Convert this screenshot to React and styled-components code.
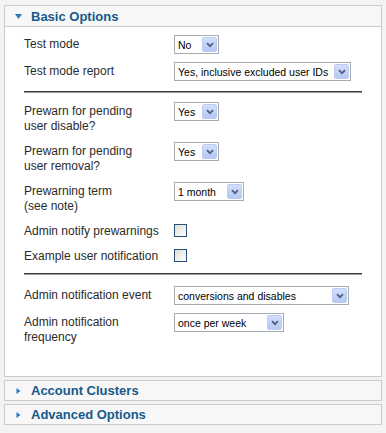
import React from "react";
import styled, { createGlobalStyle } from "styled-components";

const GlobalStyle = createGlobalStyle`
  body {
    margin: 0;
    background: #f3f3f3;
    font-family: "Liberation Sans", Arial, sans-serif;
  }
`;

const Page = styled.div`
  padding: 5px 4px;
`;

const Panel = styled.div`
  border: 1px solid #cccccc;
  background: #ffffff;
  margin-bottom: 3px;
`;

const Header = styled.div`
  display: flex;
  align-items: center;
  gap: 9px;
  height: ${(p) => (p.open ? "20px" : "19px")};
  padding-left: 10px;
  background: #f7f7f7;
  border-bottom: ${(p) => (p.open ? "1px solid #cccccc" : "none")};
`;

const Title = styled.span`
  font-size: 13px;
  font-weight: bold;
  color: #15598c;
`;

const Body = styled.div`
  padding: 4px 19px 27px;
`;

const Row = styled.div`
  display: grid;
  grid-template-columns: 150px auto;
  align-items: start;
  padding: 4px 0;
`;

const Label = styled.div`
  font-size: 12px;
  line-height: 15px;
  padding-top: 2px;
  color: #2b2b2b;
`;

const Divider = styled.div`
  height: 1px;
  border-top: 1px solid #3c3c3c;
  background: #9a9a9a;
  margin: ${(p) => p.margin};
`;

const SelectBox = styled.div`
  box-sizing: border-box;
  display: flex;
  align-items: center;
  justify-content: space-between;
  width: ${(p) => p.width}px;
  height: 19px;
  border: 1px solid #a5acb2;
  background: #ffffff;
  padding: 1px 1px 1px 3px;
  font-size: 10.5px;
  color: #000;
`;

const ArrowButton = styled.span`
  box-sizing: border-box;
  display: flex;
  align-items: center;
  justify-content: center;
  width: 15px;
  height: 15px;
  border: 1px solid #bccbf3;
  border-radius: 2px;
  background: linear-gradient(#d3defb, #b6c8f4);
`;

const CheckBox = styled.span`
  box-sizing: border-box;
  display: block;
  width: 13px;
  height: 13px;
  margin-top: 2px;
  border: 1px solid #2a4e74;
  background: linear-gradient(135deg, #dcdcd6, #ffffff);
`;

function Triangle({ open }) {
  return open ? (
    <svg width="7" height="5" viewBox="0 0 7 5">
      <path d="M0 0h7L3.5 5z" fill="#2d7bbd" />
    </svg>
  ) : (
    <svg width="7" height="6" viewBox="0 0 7 6">
      <path d="M1.5 0v6L5.5 3z" fill="#2d7bbd" />
    </svg>
  );
}

function Select({ value, width }) {
  return (
    <SelectBox width={width}>
      <span>{value}</span>
      <ArrowButton>
        <svg width="8" height="6" viewBox="0 0 8 6">
          <path d="M1 1.2l3 3 3-3" stroke="#4d6185" strokeWidth="1.8" fill="none" />
        </svg>
      </ArrowButton>
    </SelectBox>
  );
}

const Field = ({ label, children }) => (
  <Row>
    <Label>{label}</Label>
    <div>{children}</div>
  </Row>
);

export default function App() {
  return (
    <Page>
      <GlobalStyle />
      <Panel>
        <Header open>
          <Triangle open />
          <Title>Basic Options</Title>
        </Header>
        <Body>
          <Field label="Test mode">
            <Select value="No" width={45} />
          </Field>
          <Field label="Test mode report">
            <Select value="Yes, inclusive excluded user IDs" width={177} />
          </Field>
          <Divider margin="6px 0 5px" />
          <Field label={<>Prewarn for pending<br />user disable?</>}>
            <Select value="Yes" width={45} />
          </Field>
          <Field label={<>Prewarn for pending<br />user removal?</>}>
            <Select value="Yes" width={45} />
          </Field>
          <Field label={<>Prewarning term<br />(see note)</>}>
            <Select value="1 month" width={70} />
          </Field>
          <Field label="Admin notify prewarnings">
            <CheckBox />
          </Field>
          <Field label="Example user notification">
            <CheckBox />
          </Field>
          <Divider margin="5px 0 7px" />
          <Field label="Admin notification event">
            <Select value="conversions and disables" width={175} />
          </Field>
          <Field label={<>Admin notification<br />frequency</>}>
            <Select value="once per week" width={110} />
          </Field>
        </Body>
      </Panel>
      <Panel>
        <Header>
          <Triangle />
          <Title>Account Clusters</Title>
        </Header>
      </Panel>
      <Panel>
        <Header>
          <Triangle />
          <Title>Advanced Options</Title>
        </Header>
      </Panel>
    </Page>
  );
}
